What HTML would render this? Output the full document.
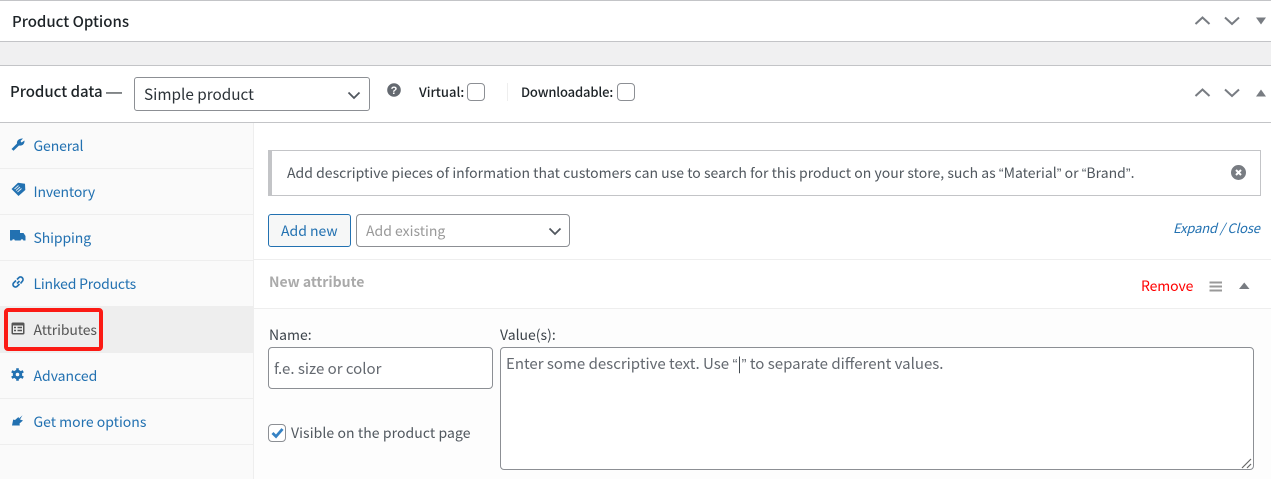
<!DOCTYPE html>
<html><head><meta charset="utf-8"><style>
html,body{margin:0;padding:0}
body{width:1271px;height:479px;position:relative;overflow:hidden;background:#fff;font-family:"Liberation Sans","Noto Sans CJK SC",sans-serif;color:#3c434a}
.a{position:absolute;box-sizing:border-box}
.t{position:absolute;white-space:nowrap;line-height:20px;font-size:14px}
.n{font-family:"Noto Sans CJK SC","Liberation Sans",sans-serif}
.l{color:#2271b1}
.q{font-family:"Liberation Sans",sans-serif}
svg{position:absolute;overflow:visible}
</style></head><body>
<div class="a" style="left:0;top:0;width:1271px;height:1px;background:#c3c4c7"></div>
<div class="a" style="left:0;top:41px;width:1271px;height:25px;background:#f0f0f1;border-top:1px solid #c3c4c7;border-bottom:1px solid #c3c4c7"></div>
<div class="a" style="left:0;top:122px;width:1271px;height:1px;background:#c3c4c7"></div>
<div class="t n" style="left:12px;top:12px;font-size:15px;font-weight:500;color:#1d2327">Product Options</div>
<div class="t n" style="left:10px;top:82px;font-size:15px;font-weight:500;color:#1d2327">Product data <span class="q" style="font-size:16px">—</span></div>

<div class="a" style="left:134px;top:77px;width:236px;height:34px;border:1px solid #8c8f94;border-radius:3px;background:#fff"></div>
<div class="t n" style="left:144px;top:84px;font-size:15.300px;color:#2c3338">Simple product</div>
<svg style="left:347px;top:91px" width="14" height="9"><path d="M1.500 1.500L7 7l5.500-5.500" fill="none" stroke="#50575e" stroke-width="1.800"/></svg>

<svg style="left:387px;top:83px" width="14" height="14"><circle cx="7" cy="7" r="6.800" fill="#646970"/><text x="7" y="11" text-anchor="middle" font-size="11" font-weight="700" fill="#fff" font-family="Liberation Sans">?</text></svg>
<div class="t n" style="left:419px;top:82px;font-size:13px;font-weight:500;color:#1d2327">Virtual:</div>
<div class="a" style="left:467px;top:83px;width:18px;height:18px;border:1px solid #8c8f94;border-radius:4px;background:#fff"></div>
<div class="a" style="left:507px;top:83px;width:1px;height:18px;background:#eee"></div>
<div class="t n" style="left:521px;top:82px;font-size:13px;font-weight:500;color:#1d2327;letter-spacing:-.150px">Downloadable:</div>
<div class="a" style="left:617px;top:83px;width:18px;height:18px;border:1px solid #8c8f94;border-radius:4px;background:#fff"></div>

<svg style="left:1194px;top:15px" width="75" height="12"><path d="M1.500 9L8.500 2.500 15.500 9M31 2.500L38 9 45 2.500" fill="none" stroke="#787c82" stroke-width="2"/><path d="M62 2.500h10L67 9.500z" fill="#787c82"/></svg>
<svg style="left:1194px;top:87px" width="75" height="12"><path d="M1.500 9L8.500 2.500 15.500 9M31 2.500L38 9 45 2.500" fill="none" stroke="#787c82" stroke-width="2"/><path d="M62 9.500h10L67 2.500z" fill="#787c82"/></svg>

<!-- left panel -->
<div class="a" style="left:0;top:123px;width:254px;height:356px;background:#fafafa;border-right:1px solid #eee"></div>
<div class="a" style="left:0;top:168px;width:253px;height:1px;background:#eee"></div>
<div class="a" style="left:0;top:214px;width:253px;height:1px;background:#eee"></div>
<div class="a" style="left:0;top:260px;width:253px;height:1px;background:#eee"></div>
<div class="a" style="left:0;top:306px;width:254px;height:47px;background:#eee"></div>
<div class="a" style="left:0;top:398px;width:253px;height:1px;background:#eee"></div>
<div class="a" style="left:0;top:444px;width:253px;height:1px;background:#eee"></div>

<div class="t n l" style="left:33.500px;top:136px;letter-spacing:-.1px">General</div>
<div class="t n l" style="left:33.500px;top:182px;letter-spacing:-.15px">Inventory</div>
<div class="t n l" style="left:33.500px;top:228px;letter-spacing:-.1px">Shipping</div>
<div class="t n l" style="left:33.500px;top:274px;letter-spacing:-.2px">Linked Products</div>
<div class="t n" style="left:33.500px;top:320px;color:#555;letter-spacing:-.1px">Attributes</div>
<div class="t n l" style="left:33.500px;top:366px">Advanced</div>
<div class="t n l" style="left:33.500px;top:412px">Get more options</div>

<svg style="left:11px;top:138px" width="14" height="13"><path d="M.5 11L6 5.500C5.500 3 7.500 .3 12 .5L9.500 3 10.500 4.500 13.500 2.500C13.800 6 11 8.300 8 7.500L2.500 12.800z" fill="#2271b1"/></svg>
<svg style="left:11px;top:182px" width="15" height="15"><path d="M.5 7L7 .8 14 1.800 14.300 8 7.500 14z" fill="#2271b1"/><path d="M3.500 7L7.500 3.500M5 8.500L9 5M6.500 10L10.500 6.500" stroke="#dce9f3" stroke-width="1"/></svg>
<svg style="left:10px;top:229px" width="16" height="14"><path d="M0 1h10v3h3.500L15.500 7v4.500H0z" fill="#2271b1"/><circle cx="3.500" cy="11.500" r="1.300" fill="#fafafa"/><circle cx="12" cy="11.500" r="1.300" fill="#fafafa"/></svg>
<svg style="left:11px;top:275px" width="14" height="14"><path d="M6 8.500L8.500 6M5 5.500L2.500 8a2.500 2.500 0 0 0 3.500 3.500L8.500 9M6 4.500L8 2.500a2.500 2.500 0 0 1 3.500 3.500L9.500 8.500" fill="none" stroke="#2271b1" stroke-width="1.700"/></svg>
<svg style="left:11px;top:322px" width="14" height="13"><rect x=".5" y=".5" width="13" height="12" rx="1.500" fill="#555"/><rect x="2" y="3.500" width="10" height="7.500" fill="#eee"/><path d="M3 5.500h2M6.500 5.500h4.500M3 8.500h2M6.500 8.500h4.500" stroke="#555" stroke-width="1.400"/></svg>
<svg style="left:11px;top:368px" width="13" height="13"><path d="M6.500 .3v12.400M.8 3.200l11.400 6.600M.8 9.800l11.400-6.600" stroke="#2271b1" stroke-width="2.600"/><circle cx="6.500" cy="6.500" r="4.700" fill="#2271b1"/><circle cx="6.500" cy="6.500" r="1.800" fill="#fafafa"/></svg>
<svg style="left:12px;top:415px" width="12" height="11"><path d="M0 10.500L1.200 4.500 3 5 6.500 2 7 3.500 10.500 .3 8 4.500 11 5.500 7.500 8.500 7.800 10.500z" fill="#2271b1"/></svg>

<div class="a" style="left:4px;top:308px;width:99px;height:43px;border:4px solid #fb1a14;border-radius:4px"></div>

<!-- right panel -->
<div class="a" style="left:254px;top:123px;width:1017px;height:356px;background:#fff"></div>
<div class="a" style="left:268px;top:150px;width:993px;height:46px;background:#fff;border:1px solid #c3c4c7;border-left:4px solid #c3c4c7"></div>
<div class="t n" style="left:287px;top:163px;color:#50575e;letter-spacing:.02px">Add descriptive pieces of information that customers can use to search for this product on your store, such as <span class="q">“</span>Material<span class="q">”</span> or <span class="q">“</span>Brand<span class="q">”</span>.</div>
<svg style="left:1231px;top:165px" width="15" height="15"><circle cx="7.500" cy="7.500" r="7.500" fill="#787c82"/><path d="M5 5l5 5M10 5l-5 5" stroke="#fff" stroke-width="2"/></svg>

<div class="a" style="left:268px;top:214px;width:83px;height:33px;background:#f6f7f7;border:1px solid #2271b1;border-radius:3px"></div>
<div class="t n l" style="left:281px;top:221px">Add new</div>
<div class="a" style="left:356px;top:214px;width:214px;height:33px;border:1px solid #8c8f94;border-radius:4px;background:#fff"></div>
<div class="t n" style="left:366px;top:221px;color:#999">Add existing</div>
<svg style="left:548px;top:227px" width="14" height="9"><path d="M1.500 1.500L7 7l5.500-5.500" fill="none" stroke="#50575e" stroke-width="1.800"/></svg>
<div class="t n l" style="left:1173px;top:218px;font-size:13px;font-style:italic;letter-spacing:-.15px">Expand / Close</div>

<div class="a" style="left:254px;top:259px;width:1017px;height:1px;background:#eee"></div>
<div class="a" style="left:254px;top:308px;width:1017px;height:1px;background:#eee"></div>
<div class="a" style="left:254px;top:309px;width:1017px;height:170px;background:#fdfdfd"></div>
<div class="t n" style="left:269px;top:272px;font-weight:700;color:#aaa">New attribute</div>
<div class="t n" style="left:1141px;top:276px;color:#f00;letter-spacing:-.1px">Remove</div>
<svg style="left:1209px;top:281px" width="14" height="11"><path d="M.5 1.500h12.500M.5 5.500h12.500M.5 9.500h12.500" stroke="#999" stroke-width="2"/></svg>
<svg style="left:1239px;top:281px" width="12" height="9"><path d="M0 8h10.500L5.250 1.500z" fill="#787c82"/></svg>

<div class="t n" style="left:269px;top:325px;color:#3c434a">Name:</div>
<div class="t n" style="left:500px;top:325px;color:#3c434a">Value(s):</div>
<div class="a" style="left:268px;top:347px;width:225px;height:42px;border:1px solid #8c8f94;border-radius:4px;background:#fff"></div>
<div class="t n" style="left:274px;top:359px;font-size:15px;color:#646970">f.e. size or color</div>
<div class="a" style="left:500px;top:347px;width:754px;height:123px;border:1px solid #8c8f94;border-radius:4px;background:#fff"></div>
<div class="t n" style="left:506px;top:354px;font-size:15px;color:#646970">Enter some descriptive text. Use <span class="q">“</span><span style="color:#3c434a">|</span><span class="q">”</span> to separate different values.</div>
<svg style="left:1241px;top:458px" width="12" height="11"><path d="M1 10L10 1M6 10L10 6" stroke="#666" stroke-width="1.200"/></svg>

<div class="a" style="left:268px;top:424px;width:18px;height:18px;border:1px solid #8c8f94;border-radius:4px;background:#fff"></div>
<svg style="left:271px;top:427px" width="13" height="12"><path d="M1.500 6L5 9.500 11.500 2" fill="none" stroke="#3582c4" stroke-width="2.800"/></svg>
<div class="t n" style="left:291px;top:423px;color:#50575e;letter-spacing:.08px">Visible on the product page</div>
</body></html>
